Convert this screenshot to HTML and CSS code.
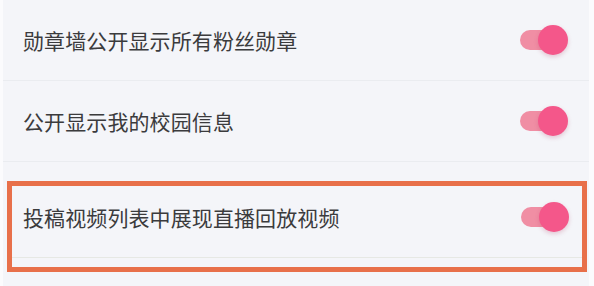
FILE: index.html
```html
<!DOCTYPE html>
<html lang="zh-CN">
<head>
    <meta charset="UTF-8">
    <meta name="viewport" content="width=device-width, initial-scale=1.0">
    <title>隐私设置</title>
    <link rel="stylesheet" href="styles.css">
</head>
<body>
    <div class="page">
        <div class="row">
            <p class="label">勋章墙公开显示所有粉丝勋章</p>
            <div class="switch"><span class="track"></span><span class="knob"></span></div>
        </div>
        <div class="line"></div>
        <div class="row">
            <p class="label">公开显示我的校园信息</p>
            <div class="switch"><span class="track"></span><span class="knob"></span></div>
        </div>
        <div class="line"></div>
        <div class="mark">
            <div class="row row-in">
                <p class="label">投稿视频列表中展现直播回放视频</p>
                <div class="switch"><span class="track"></span><span class="knob"></span></div>
            </div>
            <div class="line line-in"></div>
        </div>
    </div>
</body>
</html>
```

FILE: styles.css
```css
html{
    box-sizing: border-box;
}
*,
*::before,
*::after{
    box-sizing: inherit;
    margin: 0;
    padding: 0;
}
body{
    width: 594px;
    height: 286px;
    overflow: hidden;
    background: #fbfbfd;
    font-family: "Noto Sans CJK SC", "Noto Sans", sans-serif;
}
.page{
    width: 586px;
    height: 286px;
    margin-left: 3px;
    background: #f4f5f9;
}
.row{
    height: 80px;
    display: flex;
    align-items: center;
    justify-content: space-between;
    padding: 0 21px 0 20px;
}
.label{
    font-size: 21px;
    color: #3b3b3d;
    letter-spacing: 0.1px;
}
.line{
    height: 1px;
    background: #eaecf0;
}
.switch{
    position: relative;
    width: 48px;
    height: 30px;
}
.track{
    position: absolute;
    left: 0;
    top: 5px;
    width: 36px;
    height: 20px;
    border-radius: 10px;
    background: #f08ea4;
}
.knob{
    position: absolute;
    right: 0;
    top: 0;
    width: 30px;
    height: 30px;
    border-radius: 50%;
    background: #f4578a;
    box-shadow: 0 2px 4px rgba(180, 60, 100, 0.25);
}
.mark{
    margin: 19px 0 0 4px;
    width: 580px;
    height: 91px;
    border: 5px solid #e8704a;
}
.row-in{
    height: 62px;
    padding: 0 13px 0 11px;
}
.line-in{
    margin-top: 9px;
    background: #e6e8e4;
}
```
